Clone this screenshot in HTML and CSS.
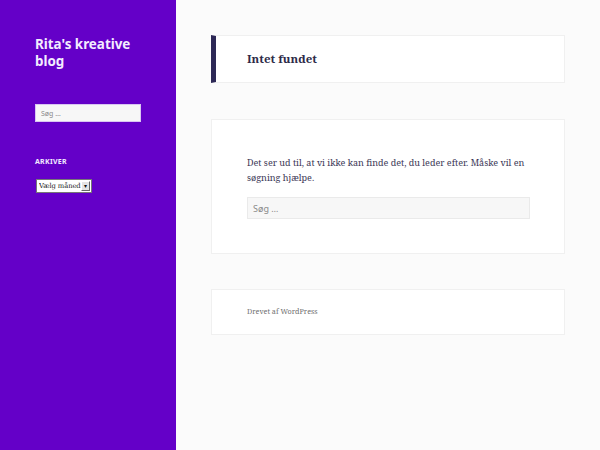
FILE: index.html
```html
<!DOCTYPE html>
<html lang="da">
<head>
    <meta charset="UTF-8">
    <title>Intet fundet – Rita's kreative blog</title>
    <link rel="stylesheet" href="styles.css">
</head>
<body>
    <div class="page">
        <div class="sidebar">
            <p class="site-title">Rita's kreative blog</p>

            <form class="widget side-search">
                <input type="search" placeholder="Søg …">
            </form>

            <div class="widget">
                <h2 class="widget-title">Arkiver</h2>
                <div class="select-wrap">
                    <select class="archive-select">
                        <option>Vælg måned</option>
                    </select>
                    <span class="select-btn">&#9662;</span>
                </div>
            </div>
        </div>

        <div class="content">
            <header class="card page-header">
                <h1 class="page-title">Intet fundet</h1>
            </header>

            <div class="card page-content">
                <p>Det ser ud til, at vi ikke kan finde det, du leder efter. Måske vil en søgning hjælpe.</p>
                <form class="main-search">
                    <input type="search" placeholder="Søg …">
                </form>
            </div>

            <footer class="card site-info">
                <a href="#">Drevet af WordPress</a>
            </footer>
        </div>
    </div>
</body>
</html>
```

FILE: styles.css
```css
html, body {
    margin: 0;
    height: 100%;
}

body {
    background-color: #fbfbfb;
    color: #333;
    font-family: "Noto Serif", "DejaVu Serif", serif;
}

.page {
    display: flex;
    min-height: 100%;
}

/* Sidebar */
.sidebar {
    width: 176px;
    flex-shrink: 0;
    background-color: #6400c8;
    padding: 36px 35px 0;
    box-sizing: border-box;
}

.site-title {
    margin: 0;
    font-family: "Noto Sans", sans-serif;
    font-weight: bold;
    font-size: 13.4px;
    line-height: 17px;
    color: #f3ecff;
}

.widget {
    margin: 0;
}

.side-search {
    margin-top: 34px;
}

.side-search input {
    display: block;
    width: 106px;
    height: 18px;
    box-sizing: border-box;
    margin: 0;
    padding: 0 5px;
    border: 1px solid #d9c6f2;
    background-color: #f7f7f7;
    font-family: "Noto Sans", sans-serif;
    font-size: 7px;
    color: #333;
}

.widget-title {
    margin: 35px 0 12px;
    font-family: "Noto Sans", sans-serif;
    font-size: 7px;
    font-weight: bold;
    letter-spacing: 0.04em;
    text-transform: uppercase;
    line-height: 10px;
    color: #f3ecff;
}

.select-wrap {
    position: relative;
    width: max-content;
    margin-left: 1px;
}

.archive-select {
    display: block;
    appearance: none;
    -webkit-appearance: none;
    width: 56px;
    height: 14px;
    margin: 0;
    padding: 0 0 0 2px;
    font-family: "DejaVu Serif", serif;
    font-size: 6.8px;
    letter-spacing: -0.1px;
    border: 1px solid #777;
    border-radius: 0;
    background-color: #fff;
    color: #222;
}

.select-btn {
    position: absolute;
    top: 2px;
    right: 2px;
    width: 9px;
    height: 10px;
    box-sizing: border-box;
    background-color: #e4e4e4;
    border: 1px solid;
    border-color: #fff #666 #666 #fff;
    font-size: 6px;
    line-height: 8px;
    text-align: center;
    color: #111;
    pointer-events: none;
}

/* Main column */
.content {
    flex: 1;
    padding: 35px 35px 0;
}

.card {
    background-color: #fff;
    border: 1px solid #f0f0f0;
    width: 354px;
    box-sizing: border-box;
}

.page-header {
    border-left: 5px solid #2d2856;
    height: 48px;
    padding: 0 31px 2px;
    display: flex;
    align-items: center;
}

.page-title {
    margin: 0;
    font-size: 11.5px;
    font-weight: bold;
    color: #2d2a48;
}

.page-content {
    margin-top: 36px;
    padding: 35px 35px 34px;
}

.page-content p {
    margin: 0;
    font-size: 9px;
    line-height: 15px;
    color: #3b3756;
}

.main-search {
    margin-top: 12px;
}

.main-search input {
    display: block;
    width: 283px;
    height: 22px;
    box-sizing: border-box;
    margin: 0;
    padding: 0 5px;
    border: 1px solid #eaeaea;
    background-color: #f7f7f7;
    font-family: "Noto Sans", sans-serif;
    font-size: 9px;
}

.main-search input::placeholder,
.side-search input::placeholder {
    color: #8a8a8a;
}

.site-info {
    margin-top: 35px;
    height: 46px;
    padding: 0 35px 2px;
    display: flex;
    align-items: center;
}

.site-info a {
    font-size: 7.2px;
    color: #707070;
    text-decoration: none;
}
```
